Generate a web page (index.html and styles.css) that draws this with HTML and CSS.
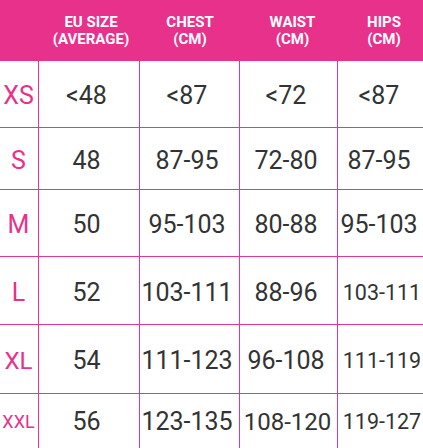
FILE: index.html
```html
<!DOCTYPE html>
<html>
<head>
<meta charset="utf-8">
<link rel="stylesheet" href="styles.css">
</head>
<body>
<div class="chart">
  <div class="head">
    <div class="hcell c1"></div>
    <div class="hcell c2">EU SIZE<br>(AVERAGE)</div>
    <div class="hcell c3">CHEST<br>(CM)</div>
    <div class="hcell c4">WAIST<br>(CM)</div>
    <div class="hcell c5">HIPS<br>(CM)</div>
  </div>
  <div class="row r1">
    <div class="cell lbl">XS</div><div class="cell">&lt;48</div><div class="cell">&lt;87</div><div class="cell">&lt;72</div><div class="cell last">&lt;87</div>
  </div>
  <div class="row r2">
    <div class="cell lbl">S</div><div class="cell">48</div><div class="cell">87-95</div><div class="cell">72-80</div><div class="cell last">87-95</div>
  </div>
  <div class="row r3">
    <div class="cell lbl">M</div><div class="cell">50</div><div class="cell">95-103</div><div class="cell">80-88</div><div class="cell last">95-103</div>
  </div>
  <div class="row r4">
    <div class="cell lbl">L</div><div class="cell">52</div><div class="cell">103-111</div><div class="cell">88-96</div><div class="cell last sm">103-111</div>
  </div>
  <div class="row r5">
    <div class="cell lbl xl">XL</div><div class="cell">54</div><div class="cell">111-123</div><div class="cell">96-108</div><div class="cell last sm">111-119</div>
  </div>
  <div class="row r6">
    <div class="cell lbl xxl">XXL</div><div class="cell">56</div><div class="cell">123-135</div><div class="cell md">108-120</div><div class="cell last sm">119-127</div>
  </div>
</div>
</body>
</html>
```

FILE: styles.css
```css
html, body {
  margin: 0;
  padding: 0;
  background: #ffffff;
}
body {
  width: 423px;
  height: 448px;
  overflow: hidden;
  font-family: Roboto, "Liberation Sans", Arial, sans-serif;
}
.chart {
  display: flex;
  flex-direction: column;
  width: 423px;
}
.head,
.row {
  display: grid;
  grid-template-columns: 39px 101px 100px 98px 85px;
}
.head {
  height: 61px;
  background: #e8318a;
}
.hcell {
  display: flex;
  align-items: center;
  justify-content: center;
  text-align: center;
  color: #ffffff;
  font-weight: 700;
  font-size: 15px;
  line-height: 17px;
}
.hcell.c2 { padding-left: 3px; }
.hcell.c4 { padding-left: 7px; }
.hcell.c5 { padding-left: 7px; }
.row {
  border-bottom: 1px solid #ea3590;
}
.r1 { height: 66px; }
.r2 { height: 61px; }
.r3 { height: 66px; }
.r4 { height: 67px; }
.r5 { height: 68px; }
.r6 { height: 60px; border-bottom: none; }
.cell {
  display: flex;
  align-items: center;
  justify-content: center;
  border-right: 1px solid #ea3590;
  color: #333333;
  font-size: 25px;
  font-weight: 400;
  padding-top: 3px;
  padding-right: 5px;
  white-space: nowrap;
}
.cell.last {
  border-right: none;
  padding-right: 3px;
}
.cell.sm {
  font-size: 21.5px;
  padding-right: 0;
  padding-left: 3px;
}
.cell.md {
  font-size: 24px;
  padding-right: 2px;
}
.cell.lbl {
  color: #e8318a;
  padding-right: 1px;
}
.cell.xl { font-size: 24px; }
.cell.xxl { font-size: 18px; }
.r6 .cell { align-items: flex-start; padding-top: 13px; }
.r6 .cell.sm { padding-top: 15px; }
.r6 .cell.md { padding-top: 14px; }
.r6 .cell.xxl { padding-top: 17px; }
```
